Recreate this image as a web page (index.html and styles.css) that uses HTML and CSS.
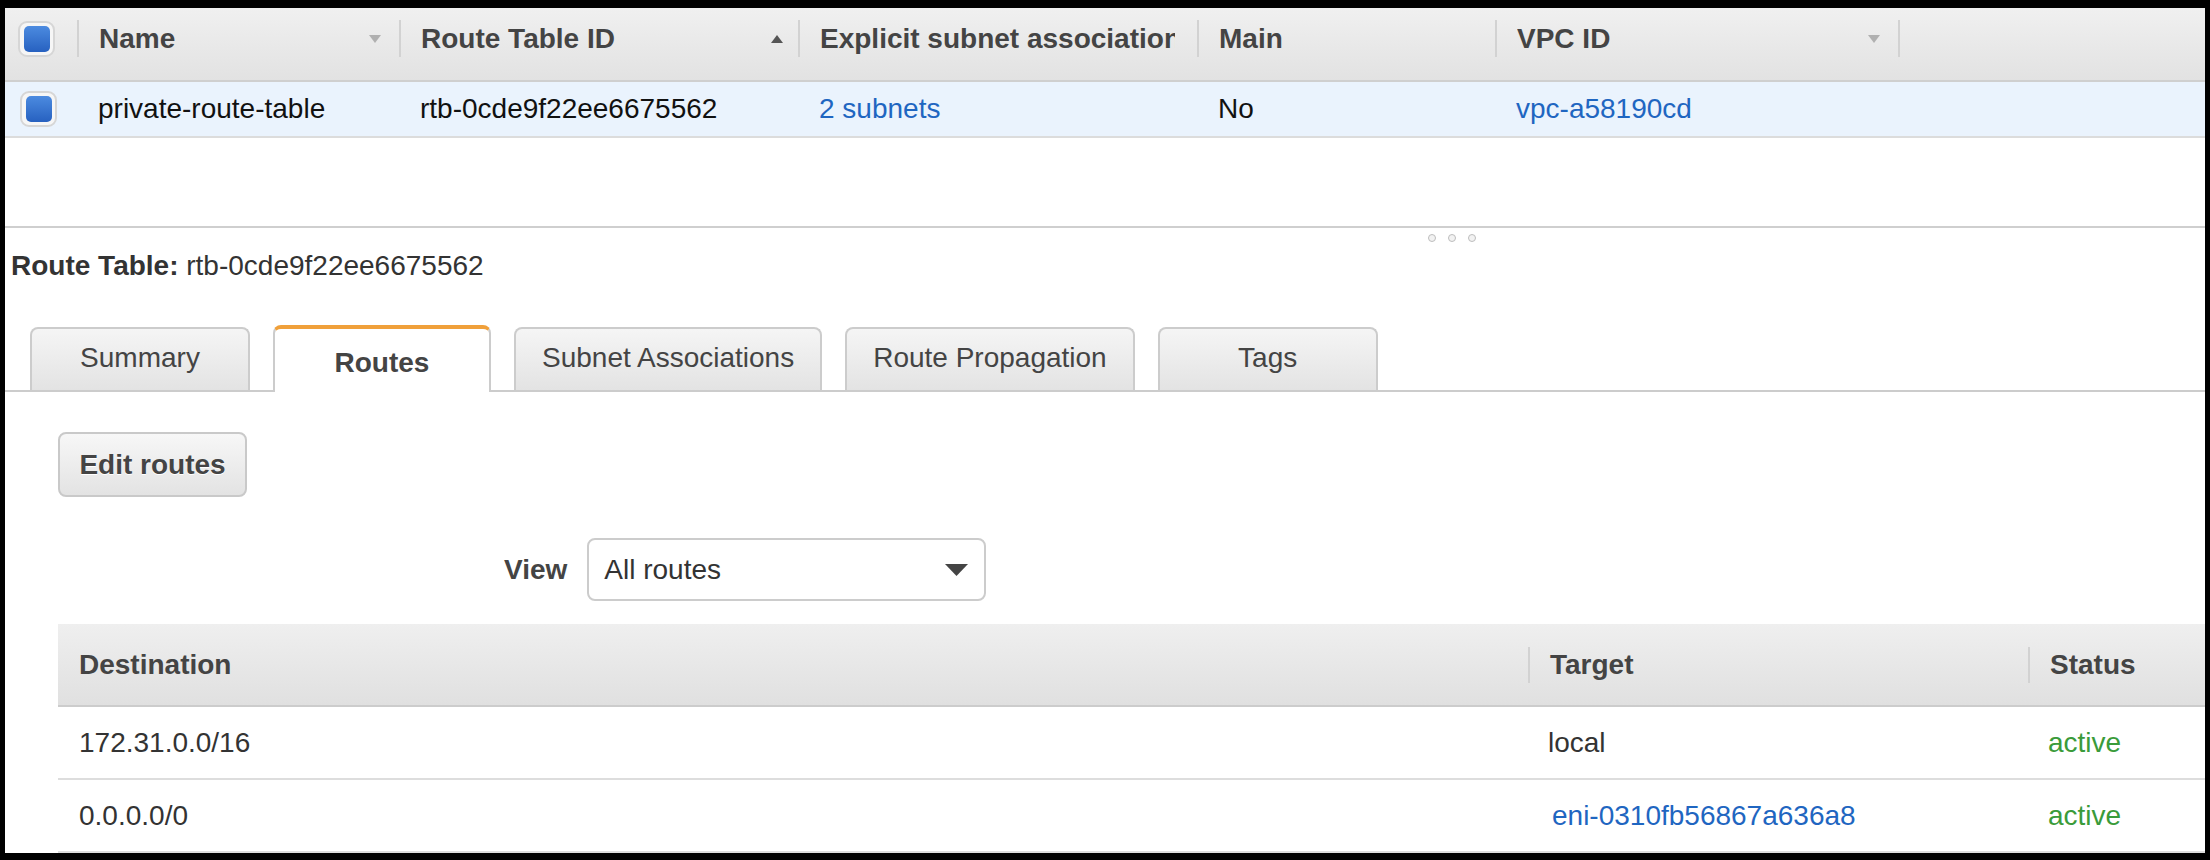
FILE: index.html
```html
<!DOCTYPE html>
<html lang="en">
<head>
<meta charset="utf-8">
<title>Route Tables</title>
<link rel="stylesheet" href="styles.css">
</head>
<body>
<div class="app">
  <div class="grid">
    <div class="grid-head">
      <div class="hcell hcell-check"><span class="checkbox"><span class="checkbox-fill"></span></span></div>
      <div class="hcell"><div class="hcell-inner"><span class="hlabel">Name</span><svg class="sort" width="12" height="8" viewBox="0 0 12 8"><path d="M0 0h12L6 8z" fill="#b0b0b0"/></svg></div></div>
      <div class="hcell"><div class="hcell-inner hcell-inner-up"><span class="hlabel">Route Table ID</span><svg class="sort" width="12" height="8" viewBox="0 0 12 8"><path d="M0 8h12L6 0z" fill="#555"/></svg></div></div>
      <div class="hcell"><div class="hcell-inner hcell-inner-clip"><span class="hlabel">Explicit subnet association</span></div></div>
      <div class="hcell"><div class="hcell-inner"><span class="hlabel">Main</span></div></div>
      <div class="hcell"><div class="hcell-inner"><span class="hlabel">VPC ID</span><svg class="sort" width="12" height="8" viewBox="0 0 12 8"><path d="M0 0h12L6 8z" fill="#b0b0b0"/></svg></div></div>
      <div class="hcell"><div class="hcell-inner"></div></div>
    </div>
    <div class="grid-row">
      <div class="cell cell-check"><span class="checkbox"><span class="checkbox-fill"></span></span></div>
      <div class="cell">private-route-table</div>
      <div class="cell">rtb-0cde9f22ee6675562</div>
      <div class="cell"><a class="link">2 subnets</a></div>
      <div class="cell">No</div>
      <div class="cell"><a class="link">vpc-a58190cd</a></div>
      <div class="cell"></div>
    </div>
    <div class="grid-empty"></div>
  </div>

  <div class="splitter">
    <span class="dot"></span><span class="dot"></span><span class="dot"></span>
  </div>

  <div class="details">
    <div class="details-title"><b>Route Table:</b> rtb-0cde9f22ee6675562</div>

    <div class="tabs">
      <div class="tab">Summary</div>
      <div class="tab tab-active">Routes</div>
      <div class="tab">Subnet Associations</div>
      <div class="tab">Route Propagation</div>
      <div class="tab">Tags</div>
    </div>

    <div class="panel">
      <button class="btn">Edit routes</button>

      <div class="view-row">
        <span class="view-label">View</span>
        <div class="select">
          <span>All routes</span>
          <svg width="23" height="12" viewBox="0 0 23 12"><path d="M0 0h23L11.5 12z" fill="#444"/></svg>
        </div>
      </div>

      <div class="routes">
        <div class="routes-head">
          <div class="rh rh-first">Destination</div>
          <div class="rh"><div class="rh-inner">Target</div></div>
          <div class="rh"><div class="rh-inner">Status</div></div>
        </div>
        <div class="routes-row">
          <div class="rc rc-first">172.31.0.0/16</div>
          <div class="rc">local</div>
          <div class="rc status">active</div>
        </div>
        <div class="routes-row">
          <div class="rc rc-first">0.0.0.0/0</div>
          <div class="rc"><a class="link link-eni">eni-0310fb56867a636a8</a></div>
          <div class="rc status">active</div>
        </div>
      </div>
    </div>
  </div>
</div>
</body>
</html>
```

FILE: styles.css
```css
* { box-sizing: border-box; }

html, body {
  margin: 0;
  padding: 0;
  background: #000;
  font-family: "Liberation Sans", Arial, Helvetica, sans-serif;
  font-size: 28px;
  color: #333;
}

.app {
  margin: 8px 5px 0 5px;
  height: 845px;
  background: #fff;
  overflow: hidden;
}

/* ---------- top grid ---------- */
.grid-head,
.grid-row {
  display: grid;
  grid-template-columns: 72px 322px 399px 399px 298px 403px 1fr;
}

.grid-head {
  height: 74px;
  background: linear-gradient(#f0f0f0, #e2e2e2);
  border-bottom: 2px solid #cfcfcf;
}

.hcell {
  padding-top: 12px;
  min-width: 0;
}

.hcell-check {
  padding-left: 13px;
  padding-top: 13px;
}

.hcell-inner {
  height: 37px;
  border-left: 2px solid #d2d2d2;
  display: flex;
  align-items: center;
  justify-content: space-between;
  padding: 0 18px 0 20px;
  font-weight: bold;
  color: #444;
  white-space: nowrap;
  min-width: 0;
}

.hcell-inner-up { padding-right: 15px; }

.hcell-inner-clip { padding-right: 22px; }

.hlabel {
  overflow: hidden;
  min-width: 0;
}

.sort { flex: none; }

.checkbox {
  width: 37px;
  height: 36px;
  border: 2px solid #d6d6d6;
  border-radius: 9px;
  background: #f6f6f6;
  display: flex;
  align-items: center;
  justify-content: center;
}

.checkbox-fill {
  width: 26px;
  height: 26px;
  border-radius: 5px;
  background: linear-gradient(#4c8be0, #2761c0);
}

.grid-row {
  height: 56px;
  background: #eaf3fd;
  border-bottom: 2px solid #dcdcdc;
}

.cell {
  display: flex;
  align-items: center;
  padding-left: 21px;
  color: #111;
  white-space: nowrap;
  min-width: 0;
}

.cell-check { padding-left: 15px; }

.link {
  color: #1f66c1;
  text-decoration: none;
}

.grid-empty { height: 88px; }

/* ---------- splitter ---------- */
.splitter {
  height: 24px;
  border-top: 2px solid #cfcfcf;
  display: flex;
  gap: 12px;
  padding: 6px 0 0 1423px;
}

.dot {
  width: 8px;
  height: 8px;
  border-radius: 50%;
  border: 1px solid #bdbdbd;
  background: #f2f2f2;
}

/* ---------- details ---------- */
.details-title {
  height: 32px;
  line-height: 32px;
  padding-left: 6px;
  color: #333;
}

.tabs {
  margin-top: 43px;
  display: flex;
  align-items: flex-end;
  gap: 23px;
  padding-left: 25px;
  border-bottom: 2px solid #cccccc;
}

.tab {
  min-width: 220px;
  height: 63px;
  padding: 0 26px;
  border: 2px solid #cccccc;
  border-bottom: none;
  border-radius: 8px 8px 0 0;
  background: linear-gradient(#f5f5f5, #e3e3e3);
  color: #444;
  display: flex;
  align-items: center;
  justify-content: center;
  padding-bottom: 4px;
  white-space: nowrap;
}

.tab-active {
  min-width: 218px;
  height: 67px;
  margin-bottom: -2px;
  background: #fff;
  border-top: 4px solid #f0a03a;
  font-weight: bold;
  padding-bottom: 0;
  padding-top: 4px;
}

.panel {
  padding: 40px 0 0 53px;
}

.btn {
  display: block;
  width: 189px;
  height: 65px;
  margin: 0;
  padding: 0;
  border: 2px solid #c9c9c9;
  border-radius: 8px;
  background: linear-gradient(#f7f7f7, #e3e3e3);
  font-family: inherit;
  font-size: 28px;
  font-weight: bold;
  color: #444;
  text-shadow: 0 1px 0 #fff;
}

.view-row {
  margin-top: 41px;
  margin-left: 446px;
  display: flex;
  align-items: center;
  gap: 20px;
}

.view-label {
  font-weight: bold;
  color: #444;
}

.select {
  width: 399px;
  height: 63px;
  border: 2px solid #cccccc;
  border-radius: 8px;
  display: flex;
  align-items: center;
  justify-content: space-between;
  padding: 0 16px 0 15px;
  color: #333;
}

/* ---------- routes table ---------- */
.routes { margin-top: 23px; }

.routes-head,
.routes-row {
  display: grid;
  grid-template-columns: 1470px 500px 1fr;
}

.routes-head {
  height: 83px;
  background: linear-gradient(#efefef, #e0e0e0);
  border-bottom: 2px solid #cccccc;
}

.rh {
  display: flex;
  align-items: center;
  font-weight: bold;
  color: #444;
}

.rh-first { padding-left: 21px; }

.rh-inner {
  height: 36px;
  border-left: 2px solid #d2d2d2;
  padding-left: 20px;
  display: flex;
  align-items: center;
  width: 100%;
}

.routes-row {
  height: 73px;
  border-bottom: 2px solid #dddddd;
}

.rc {
  display: flex;
  align-items: center;
  padding-left: 20px;
  color: #333;
  white-space: nowrap;
}

.rc-first { padding-left: 21px; }

.link-eni { margin-left: 4px; }

.status { color: #3a9b3a; }
```
